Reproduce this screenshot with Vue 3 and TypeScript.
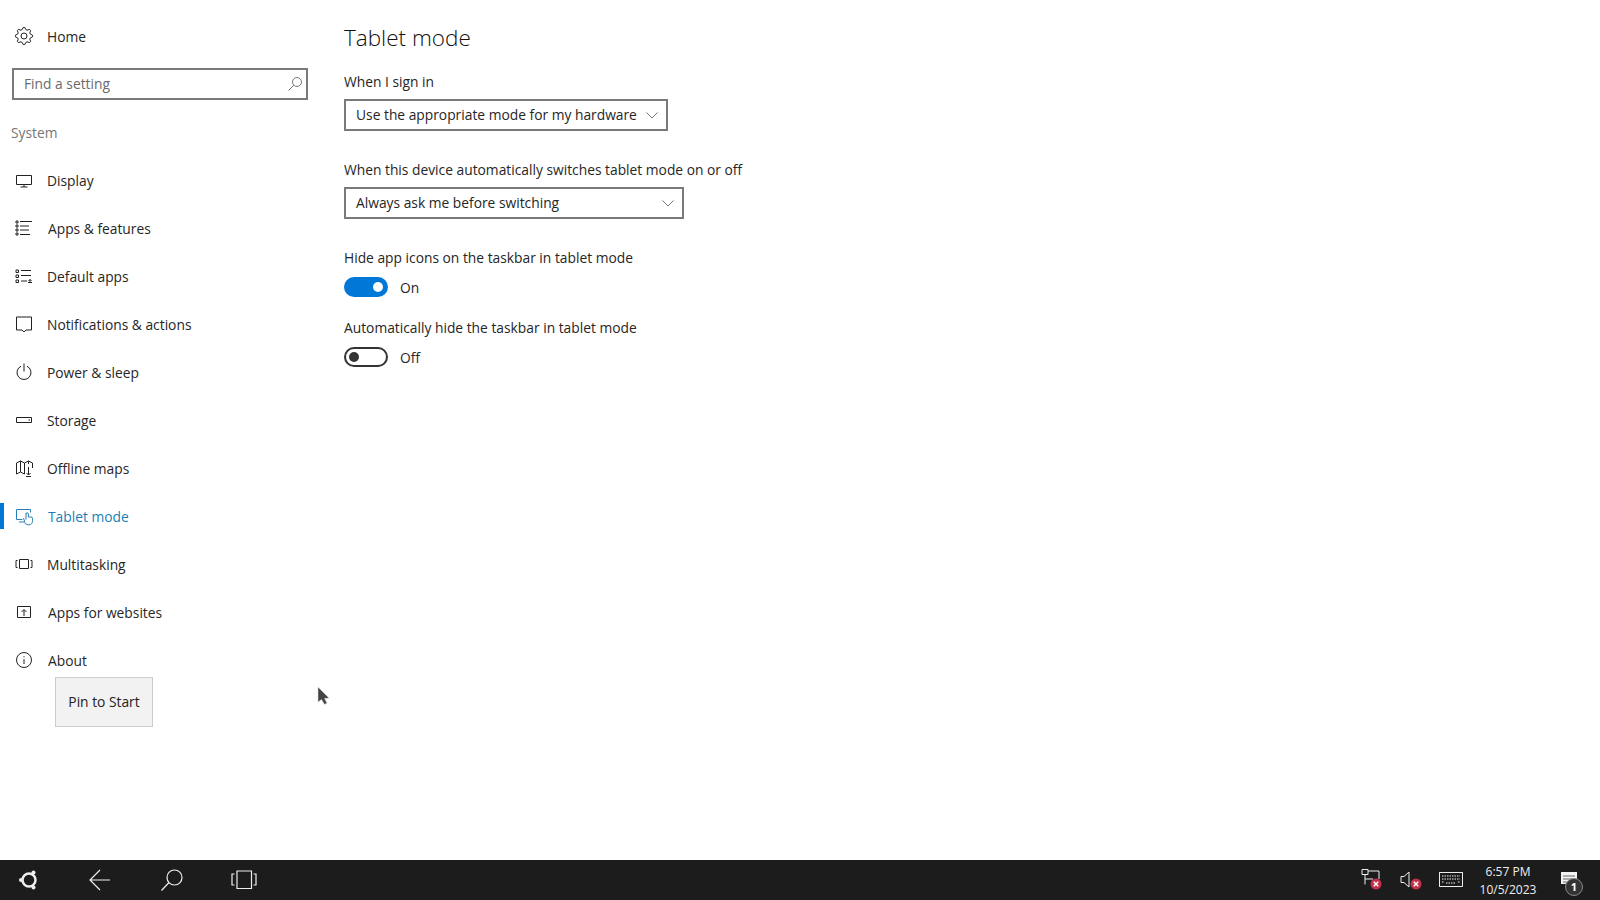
<script setup lang="ts">
import { ref } from 'vue'

interface NavItem {
  label: string
  icon: string
  shift?: boolean
  active?: boolean
}

const gearPath = () => {
  const points: string[] = []
  for (let i = 0; i < 32; i++) {
    const tooth = i % 4 < 2
    const r = tooth ? 8.6 : 6.6
    const a = ((i - 0.5) / 32) * Math.PI * 2
    points.push(`${(10 + r * Math.cos(a)).toFixed(2)} ${(10 + r * Math.sin(a)).toFixed(2)}`)
  }
  return 'M' + points.join('L') + 'Z'
}

const navItems = ref<NavItem[]>([
  { label: 'Display', icon: 'M2.5 5.5h15v9h-15zM10 14.5v2.5M6.5 17h7' },
  { label: 'Apps & features', shift: true, icon: 'M2 3h2v2h-2zM2 7h2v2h-2zM2 11h2v2h-2zM2 15h2v2h-2zM6 3.5h12M6 8h9M6 12h9M6 16.5h10' },
  { label: 'Default apps', icon: 'M2 4h2.5v2.5h-2.5zM2 9h2.5v2.5h-2.5zM2 14h2.5v2.5h-2.5zM7 4.5h10M7 9.5h10M7 15h6M14 16.5h4M16 16.5v-3l1.5 1.5M16 13.5l-1.5 1.5' },
  { label: 'Notifications & actions', icon: 'M2.5 3h15v13h-5.5l-2 2-2-2h-5.5z' },
  { label: 'Power & sleep', icon: 'M7 4.2a7 7 0 1 0 6 0M10 1.5v8' },
  { label: 'Storage', icon: 'M2.5 7.5h15v5h-15zM14.5 10h1.5' },
  { label: 'Offline maps', icon: 'M2.5 5l4-2 4 2 4-2 4 2v5M2.5 5v11l4-2 4 2M6.500 3v11M10.500 5v11M14.500 3v3M14.500 9v8M12.500 15l2 2 2-2M12 18.500h5' },
  { label: 'Tablet mode', shift: true, active: true, icon: 'M2.5 3.5h14v3M2.5 3.5v10h6M5 16h5M12 7.5v6M12 8a1.200 1.200 0 0 1 2.400 0v3h2.500a1.500 1.500 0 0 1 1.600 1.600v2a4 4 0 0 1-8 .4l-1-3' },
  { label: 'Multitasking', icon: 'M5.5 5.5h9v9h-9zM3.5 6.5h-1.500v7h1.500M16.500 6.5h1.500v7h-1.500' },
  { label: 'Apps for websites', shift: true, icon: 'M3.5 4.5h13v11h-13zM10 14v-6M7.500 10l2.500-2.500 2.500 2.500' },
  { label: 'About', shift: true, icon: 'M10 2.5a7.500 7.500 0 1 0 0 15a7.500 7.500 0 1 0 0-15zM10 9v5M10 6.200v1.200' }
])
</script>

<template>
  <div class="screen">
    <div class="window">
      <aside class="sidebar">
        <div class="home-row">
          <svg class="icon" viewBox="0 0 20 20"><path :d="gearPath()" /><circle cx="10" cy="10" r="3" /></svg>
          <span>Home</span>
        </div>
        <div class="search">
          <span>Find a setting</span>
          <svg width="16" height="16" viewBox="0 0 16 16"><circle cx="10" cy="6" r="4.500" /><path d="M6.800 9.200 1.500 14.500" /></svg>
        </div>
        <div class="group-title">System</div>
        <nav>
          <div
            v-for="item in navItems"
            :key="item.label"
            class="nav-row"
            :class="{ active: item.active, shift: item.shift }"
          >
            <svg class="icon" viewBox="0 0 20 20"><path :d="item.icon" /></svg>
            <span>{{ item.label }}</span>
          </div>
        </nav>
        <div class="pin-menu">Pin to Start</div>
      </aside>

      <main class="content">
        <h1>Tablet mode</h1>

        <label class="label">When I sign in</label>
        <div class="select first">
          <span>Use the appropriate mode for my hardware</span>
          <svg width="12" height="7" viewBox="0 0 12 7"><path d="M.5.500l5.500 5.500 5.500-5.500" /></svg>
        </div>

        <label class="label second-label">When this device automatically switches tablet mode on or off</label>
        <div class="select second">
          <span>Always ask me before switching</span>
          <svg width="12" height="7" viewBox="0 0 12 7"><path d="M.5.500l5.500 5.500 5.500-5.500" /></svg>
        </div>

        <label class="label third-label">Hide app icons on the taskbar in tablet mode</label>
        <div class="toggle-row">
          <span class="toggle on"><i></i></span>
          <span>On</span>
        </div>

        <label class="label fourth-label">Automatically hide the taskbar in tablet mode</label>
        <div class="toggle-row">
          <span class="toggle"><i></i></span>
          <span>Off</span>
        </div>
      </main>

      <!-- mouse pointer -->
      <svg class="cursor" width="14" height="22" viewBox="0 0 14 22"><path d="M1 0v15l3.500-2.500 3 5 2.500-1.500-2.500-4.500 4.500-.5z" /></svg>
    </div>

    <footer class="taskbar">
      <div class="task-left">
        <svg width="24" height="24" viewBox="0 0 24 24" class="logo">
          <circle cx="13" cy="12" r="6.500" />
          <circle class="dot" cx="5" cy="12" r="2" />
          <circle class="dot" cx="17.500" cy="4.500" r="2" />
          <circle class="dot" cx="17.500" cy="19.500" r="2" />
        </svg>
        <svg class="back" width="24" height="24" viewBox="0 0 24 24"><path d="M1 12h20M11 2 1 12l10 10" /></svg>
        <svg width="24" height="24" viewBox="0 0 24 24"><circle cx="14.500" cy="9.500" r="7.500" /><path d="M9 14.500 1.500 22.500" /></svg>
        <svg class="views" width="26" height="22" viewBox="0 0 26 22"><path d="M6 2h14.500v17.500h-14.500zM3.500 5h-2.500v11h2.500M22.500 5h2.500v11h-2.500" /></svg>
      </div>
      <div class="tray">
        <div class="tray-icon">
          <svg width="24" height="24" viewBox="0 0 24 24">
            <path d="M3 1.500h6v5h-6zM6 6.500v10M6 11h8M9 3h11v8" />
            <circle class="badge" cx="17" cy="16" r="5.500" />
            <path class="mark" d="M14.800 13.800l4.400 4.400M19.200 13.800l-4.400 4.400" />
          </svg>
        </div>
        <div class="tray-icon">
          <svg width="24" height="24" viewBox="0 0 24 24">
            <path d="M2 8.500h3l5-4.500v15l-5-4.500h-3z" />
            <circle class="badge" cx="17" cy="16" r="5.500" />
            <path class="mark" d="M14.800 13.800l4.400 4.400M19.200 13.800l-4.400 4.400" />
          </svg>
        </div>
        <div class="tray-icon">
          <svg width="24" height="16" viewBox="0 0 24 16">
            <path d="M.5.500h23v14h-23zM3 4h18M3 7h18M3 10h2M7 11h10M19 10h2" stroke-dasharray="1.500 1" />
            <path d="M.5.500h23v14h-23z" />
          </svg>
        </div>
        <div class="clock">
          <span>6:57 PM</span>
          <span>10/5/2023</span>
        </div>
        <div class="action">
          <svg width="16" height="16" viewBox="0 0 16 16">
            <path class="solid" d="M0 0h16v12h-5l-3 3-1-3h-7z" />
            <path class="lines" d="M2 4h12M2 7h12M2 10h7" />
          </svg>
          <span class="count">1</span>
        </div>
      </div>
    </footer>
  </div>
</template>

<style scoped>
.screen {
  width: 1600px;
  height: 900px;
  display: flex;
  flex-direction: column;
  overflow: hidden;
  background: #fff;
  color: #262626;
  font-family: "Open Sans", "Noto Sans", sans-serif;
  font-size: 13.8px;
}

.window {
  flex: 1;
  display: flex;
  position: relative;
}

.sidebar {
  width: 320px;
  position: relative;
  padding-top: 12px;
  box-sizing: border-box;
}

.icon {
  width: 20px;
  height: 20px;
  margin: 0 13px 0 14px;
  flex: none;
}

.icon path,
.icon circle {
  fill: none;
  stroke: #222;
  stroke-width: 1;
}

.home-row,
.nav-row {
  height: 48px;
  display: flex;
  align-items: center;
}

.nav-row.shift span {
  margin-left: 1px;
}

.nav-row.active {
  color: #1a7fb5;
  box-shadow: inset 4px 0 0 #0078d7;
  height: 26px;
  margin: 11px 0;
}

.nav-row.active .icon path {
  stroke: #2b7fb8;
}

.search {
  width: 296px;
  height: 32px;
  margin: 8px 0 0 12px;
  padding: 0 3px 1px 10px;
  box-sizing: border-box;
  border: 2px solid #7a7a7a;
  display: flex;
  align-items: center;
  justify-content: space-between;
  color: #6b6b6b;
}

.search svg circle,
.search svg path {
  fill: none;
  stroke: #777;
  stroke-width: 1;
}

.group-title {
  height: 20px;
  line-height: 20px;
  margin: 23px 0 13px 11px;
  color: #767676;
}

.pin-menu {
  position: absolute;
  left: 55px;
  top: 677px;
  width: 98px;
  height: 50px;
  padding-bottom: 2px;
  box-sizing: border-box;
  background: #f2f2f2;
  border: 1px solid #ccc;
  display: flex;
  align-items: center;
  justify-content: center;
  color: #222;
}

.content {
  flex: 1;
  padding: 22px 0 0 24px;
  display: flex;
  flex-direction: column;
  align-items: flex-start;
}

h1 {
  margin: 0 0 17px;
  font-size: 22.500px;
  font-weight: 300;
  line-height: 32px;
  color: #111;
}

.label {
  display: block;
  height: 20px;
  line-height: 22px;
  margin-bottom: 8px;
}

.second-label {
  margin-top: 29px;
  margin-bottom: 7px;
  line-height: 20px;
}

.third-label {
  margin-top: 29px;
  margin-bottom: 9px;
  line-height: 20px;
}

.fourth-label {
  margin-top: 21px;
  margin-bottom: 9px;
  line-height: 20px;
}

.select {
  height: 32px;
  box-sizing: border-box;
  border: 2px solid #7a7a7a;
  padding: 0 8px 2px 10px;
  display: flex;
  align-items: center;
  justify-content: space-between;
}

.select.first {
  width: 324px;
}

.select.second {
  width: 340px;
}

.select svg {
  margin-top: 2px;
}

.select svg path {
  fill: none;
  stroke: #777;
  stroke-width: 1;
}

.toggle-row {
  height: 20px;
  display: flex;
  align-items: center;
  gap: 12px;
}

.toggle {
  width: 44px;
  height: 20px;
  box-sizing: border-box;
  border: 2px solid #333;
  border-radius: 10px;
  display: flex;
  align-items: center;
  padding: 0 3px;
}

.toggle i {
  width: 10px;
  height: 10px;
  border-radius: 50%;
  background: #333;
}

.toggle.on {
  background: #0078d7;
  border-color: #0078d7;
  justify-content: flex-end;
}

.toggle.on i {
  background: #fff;
}

.cursor {
  position: absolute;
  left: 317px;
  top: 687px;
}

.cursor path {
  fill: #444;
  stroke: #ddd;
  stroke-width: 0.5;
}

.taskbar {
  height: 40px;
  flex: none;
  background: #1c1c1c;
  display: flex;
  align-items: center;
  justify-content: space-between;
  color: #eee;
}

.task-left {
  display: flex;
  align-items: center;
  gap: 48px;
  padding-left: 16px;
}

.task-left .back {
  margin-left: 1px;
  margin-right: -1px;
}

.task-left .views {
  margin-left: -1px;
}

.task-left svg path,
.task-left svg circle {
  fill: none;
  stroke: #eee;
  stroke-width: 1.200;
}

.task-left .logo circle {
  stroke-width: 2.500;
}

.task-left .logo .dot {
  fill: #eee;
  stroke: none;
}

.tray {
  display: flex;
  align-items: center;
  padding-right: 7px;
}

.tray-icon {
  width: 40px;
  display: flex;
  justify-content: center;
}

.tray-icon svg path {
  fill: none;
  stroke: #eee;
  stroke-width: 1;
}

.tray-icon svg .badge {
  fill: #c4304a;
}

.tray-icon svg .mark {
  stroke: #fff;
  stroke-width: 1.500;
}

.clock {
  width: 74px;
  display: flex;
  flex-direction: column;
  align-items: center;
  padding-top: 2px;
  font-size: 12px;
  line-height: 18px;
}

.action {
  width: 48px;
  height: 40px;
  position: relative;
  display: flex;
  align-items: center;
  justify-content: center;
}

.action .solid {
  fill: #f2f2f2;
}

.action .lines {
  fill: none;
  stroke: #666;
  stroke-width: 1;
}

.count {
  position: absolute;
  right: 10px;
  top: 18px;
  width: 18px;
  height: 18px;
  box-sizing: border-box;
  border: 1.500px solid #888;
  border-radius: 50%;
  background: #333;
  color: #fff;
  font-size: 11px;
  font-weight: 700;
  line-height: 15px;
  text-align: center;
}
</style>
